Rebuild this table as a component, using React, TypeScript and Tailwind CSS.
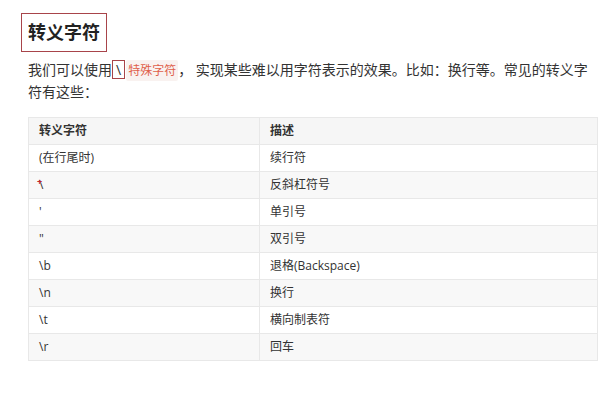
const rows: [string, string][] = [
  ['(在行尾时)', '续行符'],
  ['\\', '反斜杠符号'],
  ["'", '单引号'],
  ['"', '双引号'],
  ['\\b', '退格(Backspace)'],
  ['\\n', '换行'],
  ['\\t', '横向制表符'],
  ['\\r', '回车'],
]

export default function App() {
  return (
    <div className="h-[394px] w-[610px] bg-white pl-[21px] pt-[13px] font-['Open_Sans','Noto_Sans_CJK_SC',sans-serif] text-[#333]">
      <div className="inline-block border border-[#a8444a] px-[6px] pb-[8px] pt-[7px]">
        <h2 className="text-[18px] font-bold leading-[22px] text-[#222]">转义字符</h2>
      </div>

      <p className="mt-[7px] w-[572px] pl-[7px] text-[14px] leading-[21px]">
        我们可以使用
        <span className="inline-block border border-[#a8444a] px-[3px] leading-[17px]">\</span>
        <span className="ml-[1px] rounded-[2px] bg-[#f9f2f0] px-[2px] py-[2px] text-[12px] text-[#e0604a]">特殊字符</span>
        ， 实现某些难以用字符表示的效果。比如：换行等。常见的转义字符有这些：
      </p>

      <table className="mt-[15px] ml-[7px] w-[570px] border-collapse text-[12px]">
        <thead>
          <tr className="h-[27px] bg-[#f6f6f6]">
            <th className="w-[231px] border border-[#e8e8e8] px-[10px] text-left font-bold">转义字符</th>
            <th className="border border-[#e8e8e8] px-[10px] text-left font-bold">描述</th>
          </tr>
        </thead>
        <tbody>
          {rows.map(([k, v], i) => (
            <tr key={i} className={`h-[27px] ${i % 2 === 1 ? 'bg-[#f8f8f8]' : 'bg-white'}`}>
              <td className="relative border border-[#e8e8e8] px-[10px]">
                {i === 1 && (
                  <span className="absolute left-[8px] top-[5px] text-[9px] font-bold leading-none text-[#c0262b]">+</span>
                )}
                {k}
              </td>
              <td className="border border-[#e8e8e8] px-[10px]">{v}</td>
            </tr>
          ))}
        </tbody>
      </table>
    </div>
  )
}
